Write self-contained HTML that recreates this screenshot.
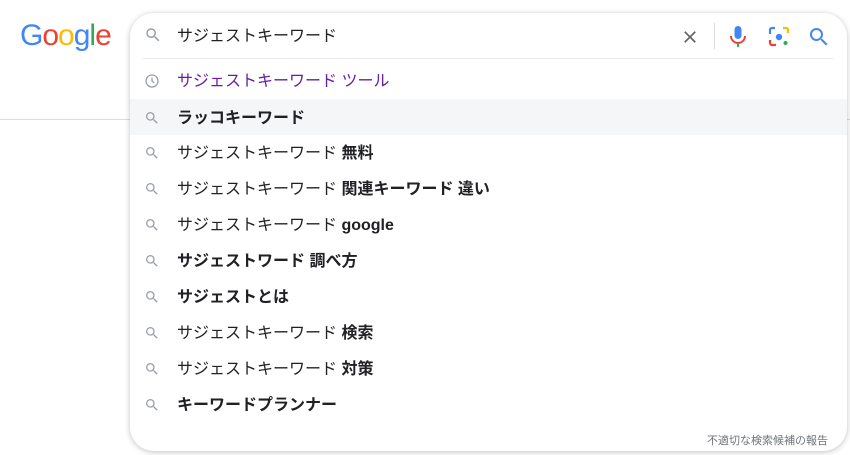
<!DOCTYPE html>
<html><head><meta charset="utf-8"><style>
*{margin:0;padding:0;box-sizing:border-box}
body{width:850px;height:455px;background:#fff;position:relative;overflow:hidden;font-family:"Liberation Sans","Noto Sans CJK JP",sans-serif;color:#202124}
.hr{position:absolute;left:0;top:119px;width:850px;height:1px;background:#dadce0}
.logo{position:absolute;left:20px;top:19px;font-size:30px;font-family:"Liberation Sans",sans-serif;letter-spacing:-1px}
.box{position:absolute;left:130px;top:13px;width:717px;height:438px;background:#fff;border-radius:24px;box-shadow:0 1px 6px rgba(32,33,36,.28)}
.inp{position:absolute;left:47px;top:9px;font-size:16px;color:#202124}
.div{position:absolute;left:13px;top:45px;width:690px;height:1px;background:#e8eaed}
.row{position:absolute;left:0;width:717px;height:36px;line-height:36px;font-size:16px}
.row .t{position:absolute;left:47px;top:2px}
.row svg{position:absolute;left:14px;top:11px}
b{font-weight:bold}
.hl{background:#f5f6f7}
.rep{position:absolute;right:19px;bottom:3px;font-size:11px;color:#70757a}
</style></head><body>
<div class="hr"></div>
<div class="logo"><span style="color:#4285f4">G</span><span style="color:#ea4335">o</span><span style="color:#fbbc05">o</span><span style="color:#4285f4">g</span><span style="color:#34a853">l</span><span style="color:#ea4335">e</span></div>
<div class="box">
<svg style="position:absolute;left:14px;top:13px" width="18" height="18" viewBox="0 0 24 24"><path fill="#9aa0a6" d="M15.5 14h-.79l-.28-.27A6.47 6.47 0 0 0 16 9.5 6.5 6.5 0 1 0 9.5 16c1.61 0 3.090-.59 4.230-1.57l.27.28v.79l5 4.99L20.49 19l-4.99-5zm-6 0C7.01 14 5 11.990 5 9.5S7.01 5 9.5 5 14 7.01 14 9.5 11.990 14 9.5 14z"/></svg>
<div class="inp">サジェストキーワード</div>
<svg style="position:absolute;left:550px;top:14px" width="20" height="20" viewBox="0 0 24 24"><path fill="#5f6368" d="M19 6.41L17.59 5 12 10.59 6.41 5 5 6.41 10.59 12 5 17.59 6.41 19 12 13.41 17.59 19 19 17.59 13.41 12z"/></svg>
<div style="position:absolute;left:584px;top:10px;width:1px;height:26px;background:#dadce0"></div>
<svg style="position:absolute;left:598px;top:12px" width="20" height="24" viewBox="0 0 20 24"><rect x="6.5" y="1" width="7" height="13" rx="3.5" fill="#4285f4"/><path d="M3 11a7 7 0 0 0 14 0" stroke="#ea4335" stroke-width="2" fill="none"/><path d="M10 18v4" stroke="#34a853" stroke-width="2"/></svg>
<svg style="position:absolute;left:638px;top:13px" width="22" height="22" viewBox="0 0 22 22"><path d="M2 8V4a2 2 0 0 1 2-2h3" stroke="#4285f4" stroke-width="2.2" fill="none"/><path d="M15 2h3a2 2 0 0 1 2 2v3" stroke="#fbbc05" stroke-width="2.2" fill="none"/><path d="M2 14v3a2 2 0 0 0 2 2h4" stroke="#ea4335" stroke-width="2.2" fill="none"/><circle cx="11" cy="11" r="3.2" fill="#4285f4"/><circle cx="17.5" cy="17" r="2" fill="#34a853"/></svg>
<svg style="position:absolute;left:677px;top:12px" width="24" height="24" viewBox="0 0 24 24"><path fill="#4285f4" d="M15.5 14h-.79l-.28-.27A6.47 6.47 0 0 0 16 9.5 6.5 6.5 0 1 0 9.5 16c1.61 0 3.09-.59 4.23-1.57l.27.28v.79l5 4.99L20.49 19l-4.99-5zm-6 0C7.01 14 5 11.99 5 9.5S7.01 5 9.5 5 14 7.01 14 9.5 11.99 14 9.5 14z"/></svg>
<div class="div"></div>
<div class="row" style="top:49px;color:#681da8"><svg width="16" height="16" viewBox="0 0 24 24"><circle cx="12" cy="12" r="9" stroke="#9aa0a6" stroke-width="2" fill="none"/><path d="M12 7v5l3.5 3" stroke="#9aa0a6" stroke-width="2" fill="none"/></svg><span class="t">サジェストキーワード ツール</span></div>
<div class="row hl" style="top:86px"><span class="t"><b>ラッコキーワード</b></span></div>
<div class="row" style="top:121px"><span class="t">サジェストキーワード <b>無料</b></span></div>
<div class="row" style="top:157px"><span class="t">サジェストキーワード <b>関連キーワード 違い</b></span></div>
<div class="row" style="top:193px"><span class="t">サジェストキーワード <b>google</b></span></div>
<div class="row" style="top:229px"><span class="t"><b>サジェストワード 調べ方</b></span></div>
<div class="row" style="top:265px"><span class="t"><b>サジェストとは</b></span></div>
<div class="row" style="top:301px"><span class="t">サジェストキーワード <b>検索</b></span></div>
<div class="row" style="top:337px"><span class="t">サジェストキーワード <b>対策</b></span></div>
<div class="row" style="top:373px"><span class="t"><b>キーワードプランナー</b></span></div>
<div class="rep">不適切な検索候補の報告</div>
</div>
<script>
document.querySelectorAll('.row').forEach(function(r,i){if(i>0){r.insertAdjacentHTML('afterbegin','<svg width="16" height="16" viewBox="0 0 24 24"><path fill="#9aa0a6" d="M15.5 14h-.79l-.28-.27A6.47 6.47 0 0 0 16 9.5 6.5 6.5 0 1 0 9.5 16c1.61 0 3.09-.59 4.23-1.57l.27.28v.79l5 4.99L20.49 19l-4.99-5zm-6 0C7.01 14 5 11.99 5 9.5S7.01 5 9.5 5 14 7.01 14 9.5 11.99 14 9.5 14z"/></svg>');}});
</script>
</body></html>
